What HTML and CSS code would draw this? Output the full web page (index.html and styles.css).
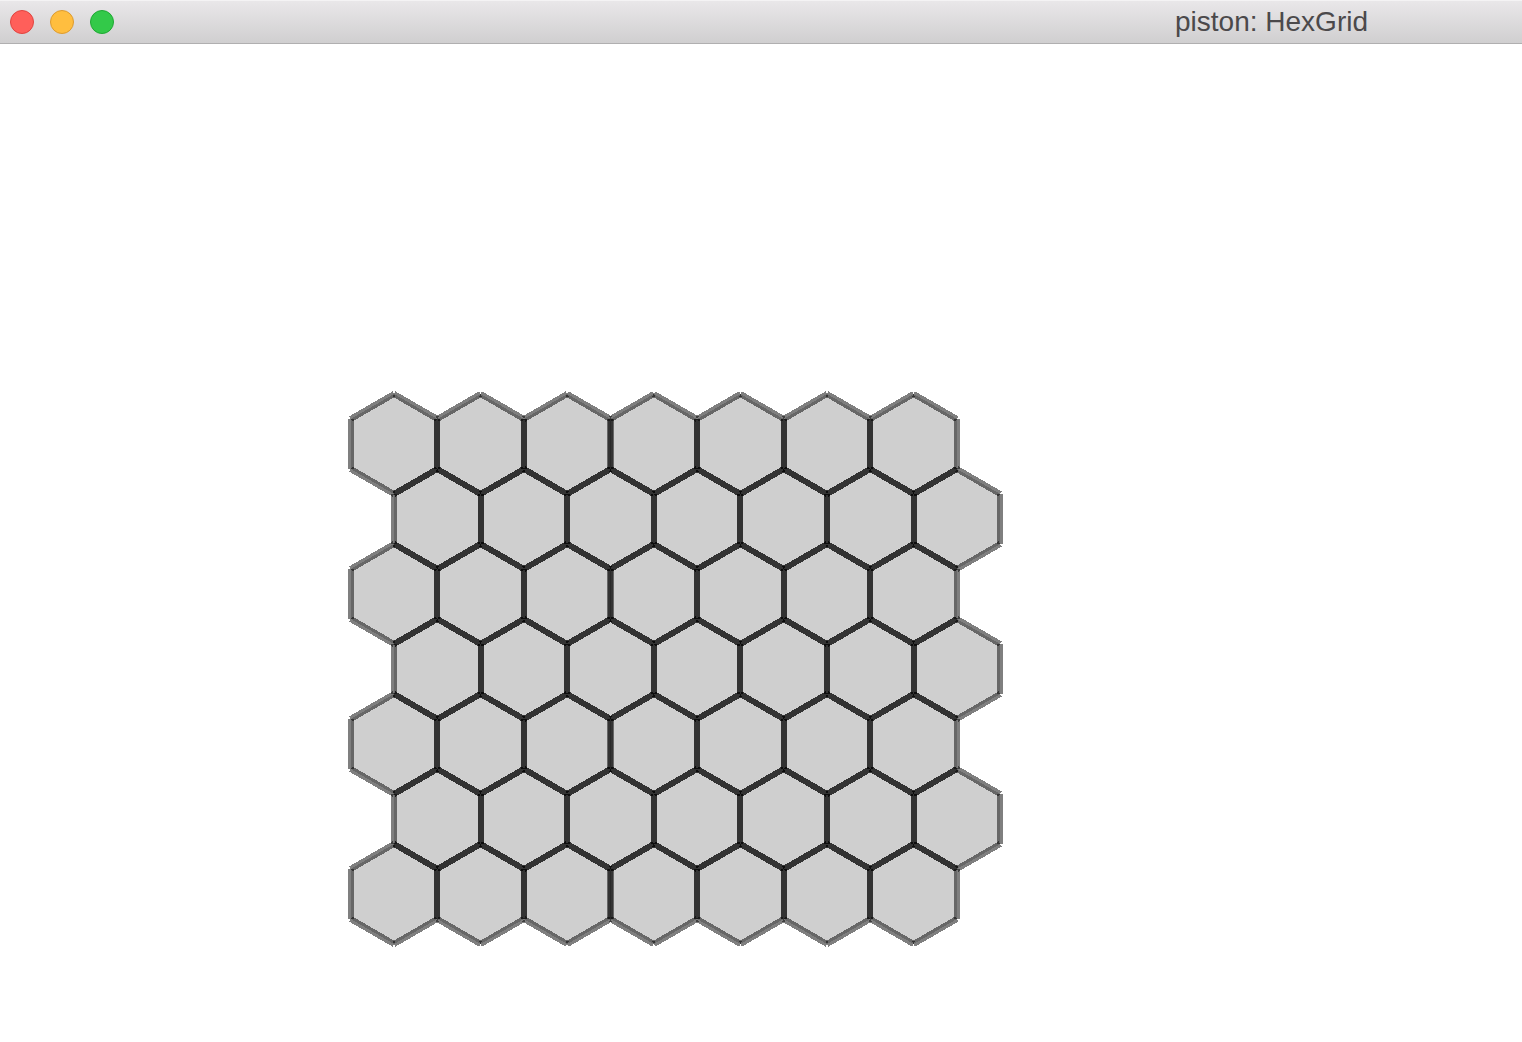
FILE: index.html
```html
<!DOCTYPE html>
<html lang="en">
<head>
<meta charset="utf-8">
<title>piston: HexGrid</title>
<link rel="stylesheet" href="styles.css">
</head>
<body>
<header class="titlebar">
  <div class="controls">
    <button class="control close" type="button" aria-label="Close"></button>
    <button class="control minimize" type="button" aria-label="Minimize"></button>
    <button class="control zoom" type="button" aria-label="Zoom"></button>
  </div>
  <h1 class="title">piston: HexGrid</h1>
</header>
<main class="canvas">
  <svg class="grid" role="img" aria-label="Hexagonal grid">
    <defs>
      <g id="hex">
        <polygon class="fill" points="0,-50 43.3,-25 43.3,25 0,50 -43.3,25 -43.3,-25"/>
        <line class="edge" x1="0" y1="-50" x2="43.3" y2="-25"/>
        <line class="edge" x1="43.3" y1="-25" x2="43.3" y2="25"/>
        <line class="edge" x1="43.3" y1="25" x2="0" y2="50"/>
        <line class="edge" x1="0" y1="50" x2="-43.3" y2="25"/>
        <line class="edge" x1="-43.3" y1="25" x2="-43.3" y2="-25"/>
        <line class="edge" x1="-43.3" y1="-25" x2="0" y2="-50"/>
      </g>
      <g id="row">
        <use href="#hex"/>
        <use href="#hex" x="86.6"/>
        <use href="#hex" x="173.2"/>
        <use href="#hex" x="259.8"/>
        <use href="#hex" x="346.4"/>
        <use href="#hex" x="433"/>
        <use href="#hex" x="519.6"/>
      </g>
    </defs>
    <g transform="translate(394 400)">
      <use href="#row"/>
      <use href="#row" x="43.3" y="75"/>
      <use href="#row" y="150"/>
      <use href="#row" x="43.3" y="225"/>
      <use href="#row" y="300"/>
      <use href="#row" x="43.3" y="375"/>
      <use href="#row" y="450"/>
    </g>
  </svg>
</main>
</body>
</html>
```

FILE: styles.css
```css
* {
  box-sizing: border-box;
}

body {
  margin: 0;
  min-height: 100vh;
  display: flex;
  flex-direction: column;
  background: #fff;
  font-family: "Helvetica Neue", "Liberation Sans", Arial, sans-serif;
}

.titlebar {
  display: flex;
  align-items: center;
  justify-content: space-between;
  height: 44px;
  padding: 0 154px 0 10px;
  background: linear-gradient(#e9e7e9, #d0cfd0);
  border-top: 1px solid #f4f3f4;
  border-bottom: 1px solid #b0afb0;
}

.controls {
  display: flex;
  gap: 16px;
}

.control {
  width: 24px;
  height: 24px;
  padding: 0;
  border: 1px solid;
  border-radius: 50%;
}

.close {
  background: #ff5f5a;
  border-color: #e0443f;
}

.minimize {
  background: #ffbe3f;
  border-color: #dd9b30;
}

.zoom {
  background: #33c949;
  border-color: #1fa833;
}

.title {
  margin: 0;
  font-size: 28px;
  font-weight: 400;
  line-height: 32px;
  color: #4b494b;
}

.canvas {
  flex: 1;
  display: flex;
}

.grid {
  flex: 1;
  min-height: 960px;
  shape-rendering: crispEdges;
}

.fill {
  fill: rgb(0 0 0 / 19%);
}

.edge {
  stroke: rgb(0 0 0 / 50%);
  stroke-width: 6px;
}
```
